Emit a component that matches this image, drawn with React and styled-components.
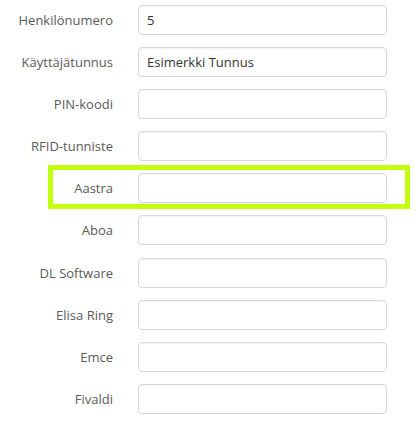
import { createGlobalStyle } from 'styled-components'
import styled from 'styled-components'

const GlobalStyle = createGlobalStyle`
    body{
        margin:0;
        background:#fff;
        font-family:"Open Sans", "Liberation Sans", sans-serif;
    }
`
const Form = styled.form`
    display:flex;
    flex-direction:column;
    gap:12.1px;
    padding-top:5px;
`
const Row = styled.div`
    position:relative;
    display:flex;
    align-items:center;
    gap:25px;
    height:30px;
    ${({ $highlight }) => $highlight && `
        &::after{
            content:"";
            position:absolute;
            left:48px;
            top:-8px;
            width:352px;
            height:34px;
            border:5px solid #c4ff0e;
            pointer-events:none;
        }
    `}
`
const Label = styled.label`
    width:113px;
    flex-shrink:0;
    text-align:right;
    font-size:13px;
    color:#5a5a5a;
`
const Input = styled.input`
    box-sizing:border-box;
    width:249px;
    height:30px;
    padding:0 8px;
    border:1px solid #d8d8d8;
    border-radius:4px;
    box-shadow:inset 0 1px 1px rgba(0,0,0,.05);
    font-family:inherit;
    font-size:13px;
    color:#333;
    background:#fff;
    outline:none;
`

const fields = [
    { label: 'Henkilönumero', value: '5' },
    { label: 'Käyttäjätunnus', value: 'Esimerkki Tunnus' },
    { label: 'PIN-koodi' },
    { label: 'RFID-tunniste' },
    { label: 'Aastra', highlight: true },
    { label: 'Aboa' },
    { label: 'DL Software' },
    { label: 'Elisa Ring' },
    { label: 'Emce' },
    { label: 'Fivaldi' },
]

const App = () => {
    return (
        <>
            <GlobalStyle />
            <Form onSubmit={e => e.preventDefault()}>
                {fields.map(field =>
                    <Row key={field.label} $highlight={field.highlight}>
                        <Label>{field.label}</Label>
                        <Input defaultValue={field.value || ''} />
                    </Row>
                )}
            </Form>
        </>
    )
}

export default App
